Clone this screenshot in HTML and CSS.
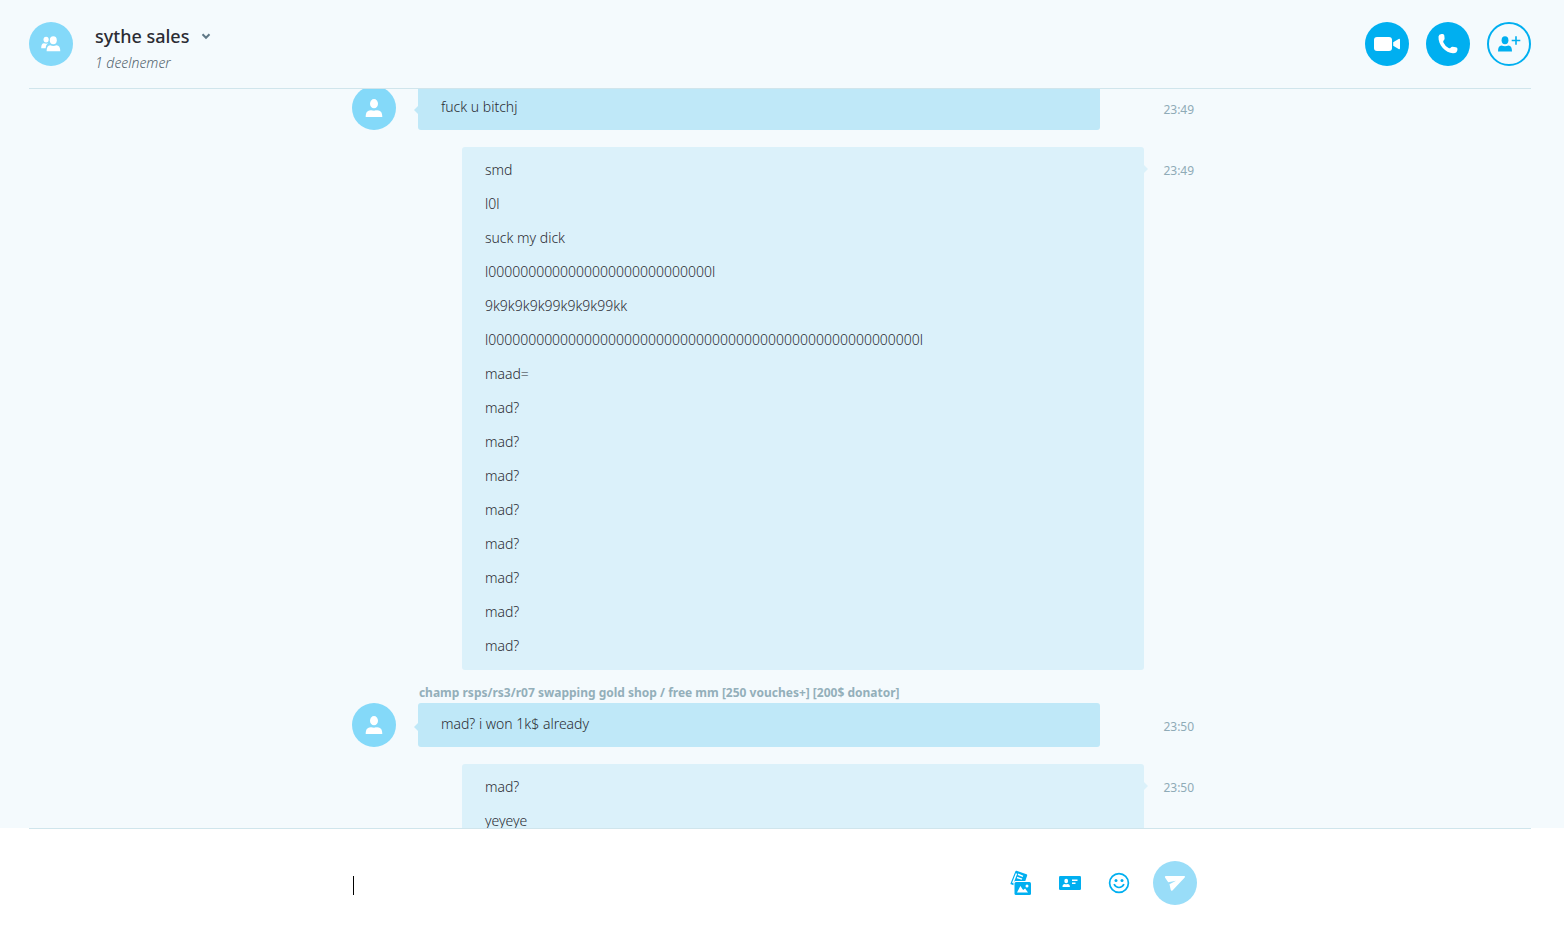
FILE: index.html
```html
<!DOCTYPE html>
<html lang="nl">
<head>
<meta charset="utf-8">
<title>sythe sales</title>
<link rel="stylesheet" href="styles.css">
</head>
<body>
<svg class="sprite" aria-hidden="true">
  <symbol id="person" viewBox="0 0 18 20"><ellipse cx="9" cy="5.700" rx="4" ry="4.600"/><path d="M.7 19c0-4.500 1.500-6.600 4.400-6.600 1.300-.2 2 .3 3.900.3s2.600-.5 3.900-.3c2.900 0 4.400 2.100 4.400 6.600z"/></symbol>
</svg>
<div class="app">
  <header class="header">
    <div class="avatar">
      <svg width="20" height="16" viewBox="0 0 20 16" aria-hidden="true"><ellipse cx="5.100" cy="3.600" rx="2.600" ry="2.900"/><path d="M.2 12.200c0-3.300 1-4.900 2.800-4.900 1.700.7 3 .6 4.200 0C5.400 8.400 4.900 10 4.700 12.200z"/><ellipse cx="12.300" cy="4.200" rx="3.500" ry="4"/><path d="M5.600 15.200c0-4 1.300-6 3.500-6 2.200 1 4.200 1 6.400 0 2.500 0 3.800 2 3.800 6z"/></svg>
    </div>
    <div class="heading">
      <button class="title" type="button"><span>sythe sales</span>
        <svg width="10" height="7" viewBox="0 0 10 7" aria-hidden="true"><path d="M1.500 1.300 5 4.800l3.500-3.500"/></svg>
      </button>
      <p class="participants">1 deelnemer</p>
    </div>
    <div class="actions">
      <button class="round" type="button" aria-label="Video-oproep"><svg width="28" height="16" viewBox="0 0 28 16" aria-hidden="true"><rect x="1" y="1" width="18" height="14" rx="3"/><path d="M20.200 6.200 25.600 3q1.400-.6 1.400.8v8.400q0 1.400-1.400.8l-5.400-3.200z"/></svg></button>
      <button class="round" type="button" aria-label="Bellen"><svg width="22" height="22" viewBox="0 0 22 22" aria-hidden="true"><path d="M1.500 3.500Q1.800 1 4.500 1h1.200q1.500 0 1.600 1.500l.3 3q0 1-.8 1.800-1 1-.4 2.200 1.600 3.600 5.200 5.500 1.200.6 2-.3.900-1 2-.9l3.200.5q1.700.3 1.700 1.800 0 4.300-4.500 4.200C8.500 20 1 12 1.500 3.500z"/></svg></button>
      <button class="round outline" type="button" aria-label="Mensen toevoegen"><svg width="24" height="18" viewBox="0 0 24 18" aria-hidden="true"><ellipse cx="8" cy="5.200" rx="3.400" ry="4"/><path d="M1 16.500c0-4 1.200-6 3.500-6 2.300 1 4.700 1 7 0 2.300 0 3.500 2 3.500 6z"/><path d="M18.200 1.200h1.600v3.500h3.500v1.600h-3.500v3.500h-1.600V6.300h-3.500V4.700h3.500z"/></svg></button>
    </div>
  </header>

  <main class="chat">
    <div class="thread">
      <section class="row">
        <div class="avatar"><svg width="18" height="20"><use href="#person"/></svg></div>
        <div class="bubble in"><p>fuck u bitchj</p></div>
        <time>23:49</time>
      </section>
      <section class="row">
        <div class="bubble out">
          <p>smd</p><p>l0l</p><p>suck my dick</p>
          <p>l0000000000000000000000000000l</p>
          <p>9k9k9k9k99k9k9k99kk</p>
          <p>l000000000000000000000000000000000000000000000000000000l</p>
          <p>maad=</p><p>mad?</p><p>mad?</p><p>mad?</p><p>mad?</p><p>mad?</p><p>mad?</p><p>mad?</p><p>mad?</p>
        </div>
        <time>23:49</time>
      </section>
      <h2 class="author">champ rsps/rs3/r07 swapping gold shop / free mm [250 vouches+] [200$ donator]</h2>
      <section class="row">
        <div class="avatar"><svg width="18" height="20"><use href="#person"/></svg></div>
        <div class="bubble in"><p>mad? i won 1k$ already</p></div>
        <time>23:50</time>
      </section>
      <section class="row">
        <div class="bubble out"><p>mad?</p><p>yeyeye</p></div>
        <time>23:50</time>
      </section>
    </div>
  </main>

  <footer class="footer">
    <form class="composer">
      <div class="field">
        <textarea class="message" rows="1" aria-label="Bericht" autofocus></textarea>
        <span class="caret"></span>
      </div>
      <button class="tool" type="button" aria-label="Bestanden verzenden"><svg width="22" height="26" viewBox="0 0 22 26" aria-hidden="true"><path d="M6.500.8 16.500 4.300q1 .4.600 1.400L15.300 11H5.500q-2 0-2 2v2.300L1 14.300q-.7-.3-.4-1.100L5.300 1.400Q5.700.5 6.500.8z"/><path class="line" d="m8 4.200 5 2.200M7 7.500l5 1.600M6.500 3.500 2.800 13"/><rect x="4.500" y="12" width="16.500" height="13" rx="1.500"/><path class="cut" d="m7 22.500 3.400-6.500 2.700 4 2-1.500 2.900 4z"/><circle class="cut" cx="17" cy="16" r="1.500"/></svg></button>
      <button class="tool" type="button" aria-label="Contact verzenden"><svg width="22" height="14" viewBox="0 0 22 14" aria-hidden="true"><rect width="22" height="14" rx="1.200"/><ellipse class="cut" cx="7.200" cy="5" rx="1.900" ry="2.300"/><path class="cut" d="M3.500 11c0-2.200.8-3 2.200-3 1 .4 2 .4 3 0 1.400 0 2.200.8 2.200 3z"/><path class="line" d="M13 4.300h5.500M13 7.300h3.500"/></svg></button>
      <button class="tool" type="button" aria-label="Emoticons"><svg width="22" height="22" viewBox="0 0 22 22" aria-hidden="true"><circle class="ring" cx="11" cy="11" r="9.400"/><circle cx="8" cy="8.600" r="1.500"/><circle cx="14" cy="8.600" r="1.500"/><path class="ring" d="M6 12.200q1.800 3.300 5 3.300t5-3.300"/></svg></button>
      <button class="send" type="submit" aria-label="Verzenden"><svg width="22" height="18" viewBox="0 0 22 18" aria-hidden="true"><path d="M1.800 2h18.400q1.500.2.500 1.500L8.700 16.200q-1.500 1.300-2-.5L5.500 10.300 12 6.800 4.200 8.300 1 3.500Q.4 2.200 1.800 2z"/></svg></button>
    </form>
  </footer>
</div>
</body>
</html>
```

FILE: styles.css
```css
* { box-sizing: border-box; margin: 0; }
body { font-family: "Noto Sans", "Open Sans", sans-serif; color: #2b2c33; }
button { font: inherit; color: inherit; border: 0; padding: 0; background: none; cursor: pointer; }
svg { display: block; fill: currentColor; flex: none; }
.sprite { display: none; }
.app { height: 100vh; display: flex; flex-direction: column; background: #f4fafd; }

.avatar {
  width: 44px; height: 44px; flex: none; border-radius: 50%;
  background: #84d9f9; color: #fff;
  display: flex; align-items: center; justify-content: center;
}

.header {
  flex: none; margin: 0 33px 0 29px; padding: 22px 0 16px;
  display: flex; align-items: flex-start;
  border-bottom: 1px solid #d0e5ec;
}
.heading { flex: 1; margin-left: 22px; }
.title { display: flex; align-items: center; gap: 12px; font-size: 18px; line-height: 28px; font-weight: 500; }
.title svg { fill: none; stroke: #5f7886; stroke-width: 2; }
.participants { font-size: 14px; line-height: 18px; padding-top: 4px; font-style: italic; font-weight: 300; color: #53646e; }
.actions { display: flex; gap: 17px; }
.round {
  width: 44px; height: 44px; border-radius: 50%; background: #00aff0; color: #fff;
  display: flex; align-items: center; justify-content: center;
}
.outline { background: none; color: #00aff0; border: 2px solid #00aff0; }

.chat { flex: 1; min-height: 0; overflow: hidden; }
.thread { width: 55%; margin: -3px auto 0; padding-right: 18px; }
.row { display: flex; align-items: flex-start; margin-bottom: 17px; }
.bubble { position: relative; border-radius: 3px; font-size: 14px; line-height: 34px; font-weight: 300; overflow-wrap: anywhere; }
.in { flex: 1; margin: 0 44px 0 22px; padding: 4px 23px 6px; background: #bfe8f8; }
.out { flex: 1; margin-left: 110px; padding: 6px 23px 7px; background: #dbf1fa; }
.bubble::before { content: ""; position: absolute; top: 20px; border: 4px solid transparent; }
.in::before { right: 100%; border-left: 0; border-right-color: #bfe8f8; }
.out::before { left: 100%; top: 18px; border-right: 0; border-left-color: #dbf1fa; }
.row time { width: 50px; flex: none; text-align: right; font-size: 12px; line-height: 18px; padding-top: 15px; color: #8fabb7; }
.author { margin: -4px 0 0 67px; font-size: 12px; line-height: 20px; font-weight: 700; color: #93afba; }

.footer { flex: none; background: #fff; }
.footer::before { content: ""; display: block; height: 1px; margin: 0 33px 0 29px; background: #d0e5ec; }
.composer { width: 55%; margin: 0 auto; padding: 32px 15px 20px 0; display: flex; align-items: center; }
.field { position: relative; flex: 1; min-width: 0; }
.message {
  display: block; width: 100%; height: 24px; padding: 0; border: 0; outline: 0; resize: none;
  font: inherit; font-size: 14px; line-height: 24px; background: none; caret-color: transparent;
}
.caret { position: absolute; left: 1px; top: 5px; width: 1px; height: 19px; background: #000; }
.tool { color: #00aff0; margin-left: 27px; }
.cut { fill: #fff; }
.line { fill: none; stroke: #fff; stroke-width: 1.5; }
.ring { fill: none; stroke: currentColor; stroke-width: 1.7; }
.send {
  width: 44px; height: 44px; border-radius: 50%; margin-left: 23px;
  background: #99ddf8; color: #fff; display: flex; align-items: center; justify-content: center;
}
```
